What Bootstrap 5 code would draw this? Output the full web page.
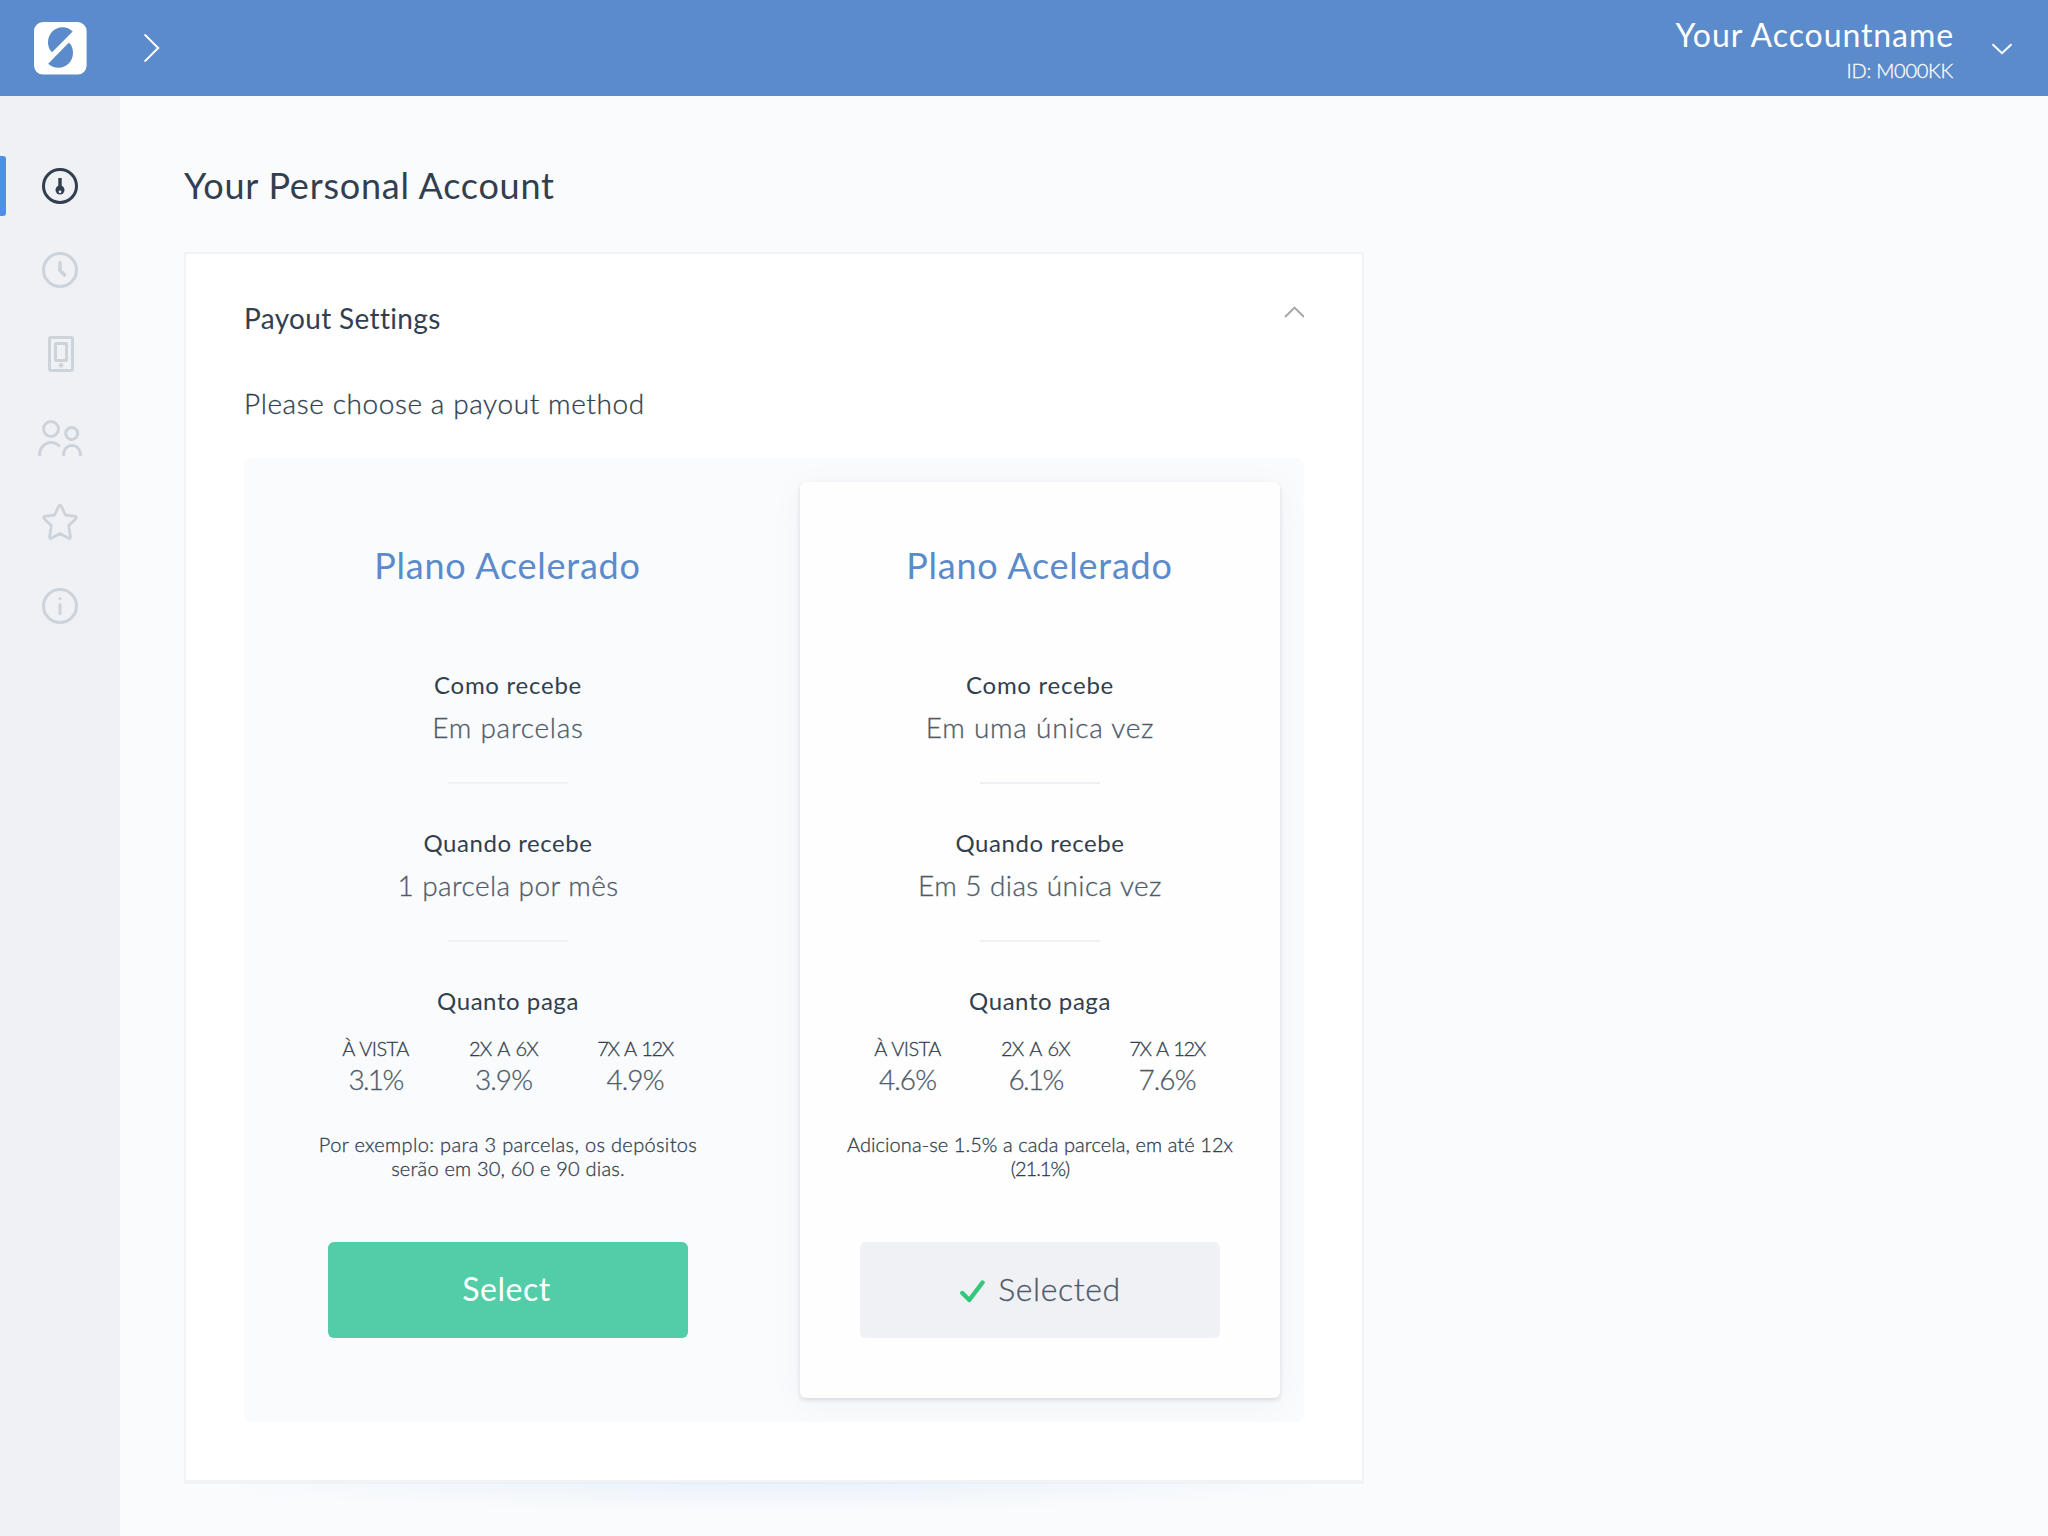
<!DOCTYPE html>
<html lang="en">
<head>
<meta charset="utf-8">
<meta name="viewport" content="width=device-width, initial-scale=1">
<title>Your Personal Account</title>
<link href="https://cdn.jsdelivr.net/npm/bootstrap@5.3.0/dist/css/bootstrap.min.css" rel="stylesheet">
<style>
:root{--ink:#323f4f;--ink-soft:#4f5b69;--brand:#5b8bcb;--muted-icon:#cdd3da;--surface:#fafbfd;--panel:#f0f1f5}
body{font-family:Lato,"Open Sans",sans-serif;background:var(--surface);color:var(--ink);font-weight:400}
.topbar{height:96px;background:var(--brand);color:#fff;padding:0 35px 0 34px}
.brand-toggle{margin-left:57px}
.acct-name{font-size:32px;line-height:38px;letter-spacing:.92px;margin-top:16px}
.acct-id{font-size:20px;line-height:24px;font-weight:300;letter-spacing:-.26px;margin-top:4px;margin-right:1px}
.acct-caret{margin:1px 0 0 37px}
.shell{height:1440px}
.sidebar{width:120px;background:var(--panel);padding-top:60px}
.side-item{height:60px;margin-bottom:24px;color:var(--muted-icon)}
.side-item.active{color:var(--ink)}
.side-item.active::before{content:"";position:absolute;left:0;top:0;width:6px;height:60px;background:#4f8fe8;border-radius:0 3px 3px 0}
.side-item svg{display:block}
.main-area{padding:67px 0 0 64px}
.page-title{font-size:36px;line-height:44px;font-weight:400;letter-spacing:.77px;margin:0 0 45px}
.payout{width:1180px;height:1232px;background:#fff;border:2px solid #f2f3f5;border-bottom-width:4px;border-radius:0;padding:46px 58px 0}
.payout-title{font-size:28px;line-height:34px;font-weight:400;letter-spacing:.34px;padding-top:1px}
.payout-lead{font-size:28px;line-height:34px;font-weight:300;letter-spacing:.6px;margin:51px 0 38px}
.payout-caret{margin-top:5px}
.payout-lead,.term-value,.rate-label,.rate-value,.fine,.acct-id,.btn-chosen{-webkit-text-stroke:.3px currentColor}
.plans{width:1060px;height:964px;background:var(--surface);border-radius:6px;padding:24px;gap:52px;overflow:hidden}
.plan{width:480px;height:916px;padding:61px 0 0;border-radius:6px}
.plan.chosen{background:#fefefe;box-shadow:0 2px 4px rgba(50,63,79,.16),0 6px 36px rgba(50,63,79,.04)}
.plan-name{font-size:36px;line-height:44px;font-weight:400;letter-spacing:.76px;color:var(--brand);margin-bottom:84px;padding-right:1px}
.term{font-size:24px;line-height:28px;letter-spacing:.74px;margin:0}
.term.snug{letter-spacing:.56px}
.term-value{font-size:28px;line-height:34px;font-weight:300;color:var(--ink-soft);margin-top:11px}
.plan hr{width:120px;height:2px;border:0;opacity:1;background:#f0f1f5;margin:38px auto 45px}
.rates{gap:61px;margin-top:21px;padding-right:2px}
.rate-label{font-size:20px;line-height:24px;font-weight:300;letter-spacing:-.85px;word-spacing:2px}
.rate-value{font-size:28px;line-height:34px;font-weight:300;color:var(--ink-soft);margin-top:2px;letter-spacing:-.9px}
.rate-value.tight{letter-spacing:-1.7px}
.w-a,.w-b{width:67px}.w-c{width:74px}
.w-a>div,.w-b>div,.w-c>div{white-space:nowrap}
.w-a .rate-label{letter-spacing:-.55px;word-spacing:1px}
.w-c .rate-label{letter-spacing:-1.35px;word-spacing:2px}
.rates .rate{display:flex;flex-direction:column;align-items:center}
.fine{font-size:20px;line-height:24px;font-weight:300;margin:36px 0 62px}
.btn-plan{width:360px;height:96px;border:0;border-radius:6px;font-size:32px;line-height:38px;padding:0 0 2px}
.btn-select,.btn-select:hover{background:#53cda8;color:#fff;font-weight:400;letter-spacing:.5px;padding-right:3px}
.btn-chosen,.btn-chosen:hover{background:var(--panel);color:var(--ink-soft);font-weight:300;letter-spacing:.6px}
.check{margin:4px 13px 0 1px}
.glow{width:1180px;height:44px;margin-top:-2px;background:radial-gradient(ellipse 590px 30px at 50% 0,rgba(216,232,248,.5),rgba(222,236,249,.32) 45%,rgba(250,251,253,0));position:relative}
.ls-2{letter-spacing:.2px}.ls-3{letter-spacing:.34px}.ls-4{letter-spacing:.42px}.ls-8{letter-spacing:.76px}.ls-0{letter-spacing:.08px}.ls-n{letter-spacing:-1px}
</style>
</head>
<body>
<header class="topbar d-flex align-items-start">
  <div class="d-flex align-items-center h-100">
    <svg width="53" height="53" viewBox="34 22 53 53"><rect x="34" y="22" width="52.600" height="52.600" rx="9" fill="#fff"/><path d="M72.7 31.6C70 28.8 66.5 27.3 62.5 27.3C54.5 27.3 48 34 48 42C48 46 49.3 49.4 51.2 51.6Q52 52.3 52.8 51.5Z" fill="#5b8bcb"/><path d="M68 43.4Q69 42.5 69.9 43.5C72 46 73 49.2 73 53C73 61 66.5 67.8 58.5 67.8C54.5 67.8 51 66.5 48.2 63.7Z" fill="#5b8bcb"/></svg>
    <svg class="brand-toggle" width="18" height="30" viewBox="0 0 18 30" fill="none" stroke="#fff" stroke-width="2"><path d="M.6 1.4L14.2 15L.6 28.6"/></svg>
  </div>
  <div class="ms-auto text-end">
    <div class="acct-name">Your Accountname</div>
    <div class="acct-id">ID: M000KK</div>
  </div>
  <div class="acct-caret h-100 d-flex align-items-center">
    <svg width="22" height="12" viewBox="0 0 22 12" fill="none" stroke="#fff" stroke-width="2"><path d="M1.500 1.200L11 10.200L20.500 1.200"/></svg>
  </div>
</header>
<div class="shell d-flex">
  <nav class="sidebar flex-shrink-0">
    <a class="side-item active position-relative d-flex align-items-center justify-content-center"><svg width="48" height="40" viewBox="-24 -20 48 40" fill="none" stroke="currentColor" stroke-width="3"><circle r="16.500"/><path d="M0-8V1" stroke-width="3.400"/><circle cy="4" r="4.500" fill="currentColor" stroke="none"/><circle cy="5.800" r="1.400" fill="#f0f1f5" stroke="none"/></svg></a>
    <a class="side-item d-flex align-items-center justify-content-center"><svg width="48" height="40" viewBox="-24 -20 48 40" fill="none" stroke="currentColor" stroke-width="3"><circle r="16.500"/><path d="M0-7.500V.4L4.600 5" stroke-width="3.600" stroke-linecap="round" stroke-linejoin="round"/></svg></a>
    <a class="side-item d-flex align-items-center justify-content-center"><svg width="48" height="40" viewBox="-24 -20 48 40" fill="none" stroke="currentColor" stroke-width="3"><rect x="-10.500" y="-16.500" width="23" height="33" rx="1.500"/><rect x="-4.500" y="-10.500" width="11" height="17" rx=".6"/><circle cx="1" cy="11.300" r="2.300" fill="currentColor" stroke="none"/></svg></a>
    <a class="side-item d-flex align-items-center justify-content-center"><svg width="48" height="40" viewBox="-24 -20 48 40" fill="none" stroke="currentColor" stroke-width="3"><circle cx="-9" cy="-9" r="7.500"/><circle cx="11.700" cy="-4.500" r="6"/><path d="M-20.500 18C-20.500 10-15.500 4.500-9 4.500C-5.500 4.500-2.200 6-.2 8.600"/><path d="M3.500 18C3.500 11.500 7 7.500 12 7.500S20.500 11.500 20.500 18"/></svg></a>
    <a class="side-item d-flex align-items-center justify-content-center"><svg width="48" height="40" viewBox="-24 -20 48 40" fill="none" stroke="currentColor" stroke-width="3" stroke-linejoin="round"><path d="M-1.300-15.800Q0-17.600 1.300-15.800L5.400-7L15.200-5.600Q17.200-5.100 16.100-3.600L8.700 3.500L10.400 14.600Q10.500 17 8.600 16.300L0 11.600L-8.600 16.300Q-10.500 17-10.400 14.600L-8.700 3.500L-16.100-3.600Q-17.200-5.100-15.200-5.600L-5.400-7Z" stroke-width="2.800"/></svg></a>
    <a class="side-item d-flex align-items-center justify-content-center"><svg width="48" height="40" viewBox="-24 -20 48 40" fill="none" stroke="currentColor" stroke-width="3"><circle r="16.500"/><path d="M0-1.500V7.500" stroke-linecap="round"/><circle cy="-7.500" r="1.600" fill="currentColor" stroke="none"/></svg></a>
  </nav>
  <main class="main-area">
    <h1 class="page-title">Your Personal Account</h1>
    <section class="card payout">
      <div class="d-flex justify-content-between align-items-start">
        <div class="payout-title">Payout Settings</div>
        <svg class="payout-caret" width="20" height="13" viewBox="0 0 20 13" fill="none" stroke="#a3a7ad" stroke-width="2"><path d="M1 12L10.500 2.600L20 12"/></svg>
      </div>
      <p class="payout-lead">Please choose a payout method</p>
      <div class="plans d-flex">
        <article class="plan text-center">
          <h2 class="plan-name">Plano Acelerado</h2>
          <p class="term">Como recebe</p>
          <div class="term-value ls-8">Em parcelas</div>
          <hr>
          <p class="term snug">Quando recebe</p>
          <div class="term-value ls-4">1 parcela por mês</div>
          <hr>
          <p class="term snug">Quanto paga</p>
          <div class="rates d-flex justify-content-center">
            <div class="rate w-a"><div class="rate-label">À VISTA</div><div class="rate-value tight">3.1%</div></div>
            <div class="rate w-b"><div class="rate-label">2X A 6X</div><div class="rate-value">3.9%</div></div>
            <div class="rate w-c"><div class="rate-label">7X A 12X</div><div class="rate-value">4.9%</div></div>
          </div>
          <p class="fine"><span class="ls-3">Por exemplo: para 3 parcelas, os depósitos</span><br><span class="ls-2">serão em 30, 60 e 90 dias.</span></p>
          <button type="button" class="btn btn-plan btn-select">Select</button>
        </article>
        <article class="plan chosen text-center">
          <h2 class="plan-name">Plano Acelerado</h2>
          <p class="term">Como recebe</p>
          <div class="term-value ls-8">Em uma única vez</div>
          <hr>
          <p class="term snug">Quando recebe</p>
          <div class="term-value ls-4">Em 5 dias única vez</div>
          <hr>
          <p class="term snug">Quanto paga</p>
          <div class="rates d-flex justify-content-center">
            <div class="rate w-a"><div class="rate-label">À VISTA</div><div class="rate-value">4.6%</div></div>
            <div class="rate w-b"><div class="rate-label">2X A 6X</div><div class="rate-value tight">6.1%</div></div>
            <div class="rate w-c"><div class="rate-label">7X A 12X</div><div class="rate-value">7.6%</div></div>
          </div>
          <p class="fine"><span class="ls-0">Adiciona-se 1.5% a cada parcela, em até 12x</span><br><span class="ls-n">(21.1%)</span></p>
          <button type="button" class="btn btn-plan btn-chosen d-inline-flex align-items-center justify-content-center"><svg class="check" width="25" height="23" viewBox="0 0 25 23" fill="none" stroke="#34c77b" stroke-width="4.400" stroke-linecap="round"><path d="M2.300 13L9.300 20L22.500 2.500" stroke-linejoin="round"/></svg>Selected</button>
        </article>
      </div>
    </section>
    <div class="glow"></div>
  </main>
</div>
<script src="https://cdn.jsdelivr.net/npm/bootstrap@5.3.0/dist/js/bootstrap.bundle.min.js"></script>
</body>
</html>
